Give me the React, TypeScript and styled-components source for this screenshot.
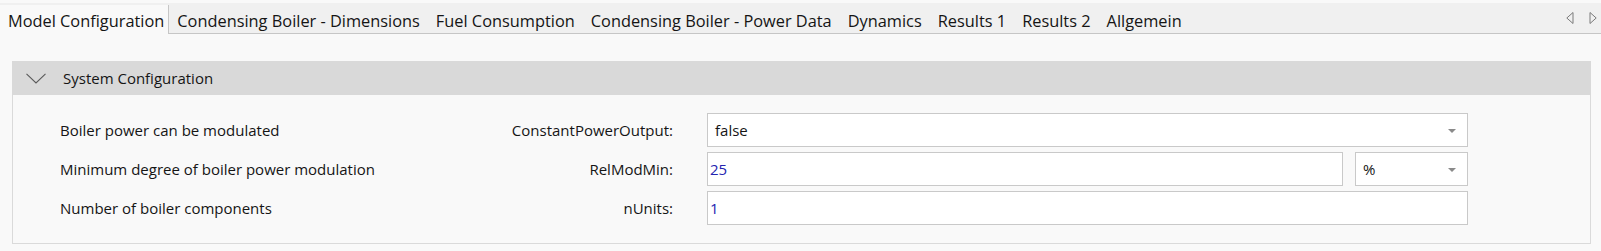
import React from "react";
import styled, { createGlobalStyle } from "styled-components";

const GlobalStyle = createGlobalStyle`
  html, body {
    margin: 0;
    padding: 0;
    background: #f9f9f9;
  }
  body {
    font-family: "Open Sans", "Noto Sans", "DejaVu Sans", sans-serif;
    color: #151515;
  }
`;

const Page = styled.div`
  width: 1601px;
  height: 251px;
  padding-top: 3px;
  box-sizing: border-box;
  overflow: hidden;
  background: #f9f9f9;
`;

const TabBar = styled.div`
  display: flex;
  align-items: flex-end;
  height: 30px;
  background: #f0f0f0;
  border-bottom: 1px solid #c6c6c6;
`;

const Tab = styled.div<{ $active?: boolean }>`
  height: ${(p) => (p.$active ? "29px" : "30px")};
  box-sizing: border-box;
  padding: ${(p) => (p.$active ? "4px 4px 0 8px" : "6px 8px 0 8px")};
  margin-bottom: ${(p) => (p.$active ? "-1px" : "0")};
  font-size: 16.35px;
  line-height: 24px;
  white-space: nowrap;
  background: ${(p) => (p.$active ? "#f9f9f9" : "transparent")};
  border-right: ${(p) => (p.$active ? "1px solid #c6c6c6" : "none")};
`;

const NavArrows = styled.div`
  margin-left: auto;
  display: flex;
  align-items: center;
  gap: 15px;
  height: 30px;
  padding-right: 4px;
`;

const Content = styled.div`
  padding: 27px 10px 0 12px;
`;

const Panel = styled.div`
  border: 1px solid #dadada;
  border-top: none;
  background: #f9f9f9;
`;

const PanelHeader = styled.div`
  display: flex;
  align-items: center;
  height: 34px;
  background: #d9d9d9;
  margin: 0 -1px;
  padding-left: 14px;
  font-size: 15px;
`;

const HeaderTitle = styled.span`
  margin-left: 17px;
`;

const PanelBody = styled.div`
  display: flex;
  flex-direction: column;
  gap: 5px;
  padding: 18px 0 18px 47px;
`;

const Row = styled.div`
  display: flex;
  align-items: center;
  height: 34px;
  font-size: 15px;
`;

const Description = styled.div`
  width: 420px;
  white-space: nowrap;
`;

const ParamName = styled.div`
  width: 193px;
  margin-right: 34px;
  text-align: right;
  white-space: nowrap;
`;

const FieldArea = styled.div`
  display: flex;
  gap: 12px;
  width: 761px;
  height: 34px;
`;

const Box = styled.div<{ $width?: number; $combo?: boolean; $value?: boolean }>`
  position: relative;
  display: flex;
  align-items: center;
  box-sizing: border-box;
  height: 34px;
  ${(p) => (p.$width ? `width: ${p.$width}px; flex: none;` : "flex: 1;")}
  background: #ffffff;
  border: 1px solid #c9c9c9;
  padding-left: ${(p) => (p.$combo ? "7px" : "2px")};
  color: ${(p) => (p.$value ? "#2424b0" : "#151515")};
  font-size: 15px;
`;

const DropArrow = styled.span`
  position: absolute;
  right: 11px;
  top: 15px;
  width: 0;
  height: 0;
  border-left: 4px solid transparent;
  border-right: 4px solid transparent;
  border-top: 4px solid #8a8a8a;
`;

const Chevron = () => (
  <svg width="20" height="11" viewBox="0 0 20 11">
    <polyline points="0.5,0.8 10,10 19.5,0.8" fill="none" stroke="#5a5a5a" strokeWidth="1.1" />
  </svg>
);

const TriLeft = () => (
  <svg width="8" height="12" viewBox="0 0 8 12">
    <polygon points="7,0.5 0.8,6 7,11.5" fill="none" stroke="#7a7a7a" strokeWidth="1" />
  </svg>
);

const TriRight = () => (
  <svg width="8" height="12" viewBox="0 0 8 12">
    <polygon points="1,0.5 7.2,6 1,11.5" fill="none" stroke="#7a7a7a" strokeWidth="1" />
  </svg>
);

const tabs = [
  "Model Configuration",
  "Condensing Boiler - Dimensions",
  "Fuel Consumption",
  "Condensing Boiler - Power Data",
  "Dynamics",
  "Results 1",
  "Results 2",
  "Allgemein",
];

export default function App() {
  return (
    <>
      <GlobalStyle />
      <Page>
        <TabBar>
          {tabs.map((t, i) => (
            <Tab key={t} $active={i === 0}>
              {t}
            </Tab>
          ))}
          <NavArrows>
            <TriLeft />
            <TriRight />
          </NavArrows>
        </TabBar>
        <Content>
          <Panel>
            <PanelHeader>
              <Chevron />
              <HeaderTitle>System Configuration</HeaderTitle>
            </PanelHeader>
            <PanelBody>
              <Row>
                <Description>Boiler power can be modulated</Description>
                <ParamName>ConstantPowerOutput:</ParamName>
                <FieldArea>
                  <Box $combo>
                    false
                    <DropArrow />
                  </Box>
                </FieldArea>
              </Row>
              <Row>
                <Description>Minimum degree of boiler power modulation</Description>
                <ParamName>RelModMin:</ParamName>
                <FieldArea>
                  <Box $value>25</Box>
                  <Box $combo $width={113}>
                    %
                    <DropArrow />
                  </Box>
                </FieldArea>
              </Row>
              <Row>
                <Description>Number of boiler components</Description>
                <ParamName>nUnits:</ParamName>
                <FieldArea>
                  <Box $value>1</Box>
                </FieldArea>
              </Row>
            </PanelBody>
          </Panel>
        </Content>
      </Page>
    </>
  );
}
